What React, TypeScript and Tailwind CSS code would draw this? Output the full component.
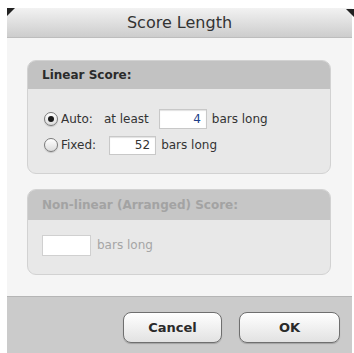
import React from "react";

function Radio({ checked }: { checked?: boolean }) {
  return (
    <span className="flex h-[14px] w-[14px] items-center justify-center rounded-full border border-[#7a7a7a] bg-gradient-to-b from-[#ffffff] to-[#dcdcdc] shadow-[0_1px_1px_rgba(0,0,0,0.15)]">
      {checked && <span className="h-[6px] w-[6px] rounded-full bg-[#1a1a1a]" />}
    </span>
  );
}

export default function App() {
  return (
    <div className="h-[353px] w-[354px] bg-white" style={{ fontFamily: '"DejaVu Sans", "Liberation Sans", sans-serif' }}>
      <div className="relative ml-[7px] flex h-[345px] w-[345px] translate-y-[8px] flex-col bg-[#f5f5f5]">
        <span className="absolute left-0 top-0 h-0 w-0 border-l-[4px] border-t-[4px] border-l-[#222] border-t-[#222] border-r-[4px] border-r-transparent border-b-[4px] border-b-transparent" />
        <span className="absolute right-[-2px] top-[1px] h-0 w-0 border-r-[4px] border-t-[4px] border-r-[#222] border-t-[#222] border-l-[4px] border-l-transparent border-b-[4px] border-b-transparent" />
        {/* Title bar */}
        <div className="flex h-[30px] items-center justify-center border-b border-[#bdbdbd] bg-gradient-to-b from-[#f2f2f2] to-[#cdcdcd] text-[16px] text-[#333]">
          Score Length
        </div>
        {/* Content */}
        <div className="flex flex-1 flex-col gap-[15px] pl-[20px] pr-[21px] pt-[22px]">
          {/* Group 1 */}
          <div className="overflow-hidden rounded-[9px] border border-[#d2d2d2] bg-[#e8e8e8]">
            <div className="flex h-[28px] items-center bg-[#c2c2c2] pl-[14px] text-[12px] font-bold text-[#2b2b2b]">
              Linear Score:
            </div>
            <div className="flex h-[84px] flex-col gap-[6px] pl-[16px] pt-[20px] text-[12px] text-[#333]">
              <div className="flex h-[20px] items-center">
                <Radio checked />
                <span className="ml-[3px]">Auto:</span>
                <span className="ml-[11px]">at least</span>
                <span className="ml-[10px] flex h-[20px] w-[48px] items-center justify-end border border-[#c8c8c8] bg-white pr-[5px] text-[#1d3f8a] shadow-[inset_0_1px_1px_rgba(0,0,0,0.12)]">
                  4
                </span>
                <span className="ml-[5px]">bars long</span>
              </div>
              <div className="flex h-[20px] items-center">
                <Radio />
                <span className="ml-[3px]">Fixed:</span>
                <span className="ml-[13px] flex h-[19px] w-[47px] items-center justify-end border border-[#c8c8c8] bg-white pr-[5px] shadow-[inset_0_1px_1px_rgba(0,0,0,0.12)]">
                  52
                </span>
                <span className="ml-[5px]">bars long</span>
              </div>
            </div>
          </div>
          {/* Group 2 */}
          <div className="overflow-hidden rounded-[9px] border border-[#d2d2d2] bg-[#e8e8e8]">
            <div className="flex h-[30px] items-center bg-[#c6c6c6] pl-[14px] text-[12px] font-bold text-[#a3a3a3]">
              Non-linear (Arranged) Score:
            </div>
            <div className="flex h-[54px] items-start pl-[14px] pt-[15px] text-[12px] text-[#a5a5a5]">
              <span className="h-[21px] w-[49px] border border-[#d0d0d0] bg-white" />
              <span className="ml-[6px] mt-[1px]">bars long</span>
            </div>
          </div>
        </div>
        {/* Bottom bar */}
        <div className="flex h-[57px] items-start justify-end gap-[17px] border-t border-[#b5b5b5] bg-[#cbcbcb] pr-[12px] pt-[15px]">
          <button className="flex h-[31px] w-[99px] items-center justify-center rounded-[8px] border border-[#6f6f6f] bg-gradient-to-b from-[#ffffff] to-[#e2e2e2] text-[13px] font-bold text-[#2a2a2a] shadow-[0_1px_1px_rgba(0,0,0,0.2)]">
            Cancel
          </button>
          <button className="flex h-[31px] w-[101px] items-center justify-center rounded-[8px] border border-[#6f6f6f] bg-gradient-to-b from-[#ffffff] to-[#e2e2e2] text-[13px] font-bold text-[#2a2a2a] shadow-[0_1px_1px_rgba(0,0,0,0.2)]">
            OK
          </button>
        </div>
      </div>
    </div>
  );
}
